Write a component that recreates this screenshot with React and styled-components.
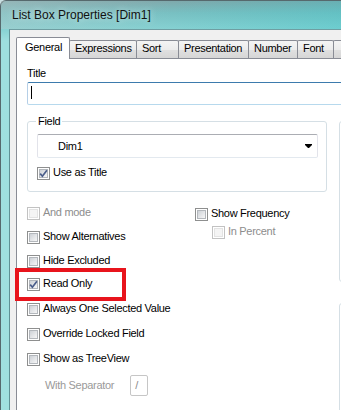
import React from "react";
import styled, { createGlobalStyle } from "styled-components";

const Global = createGlobalStyle`
  html, body { margin: 0; padding: 0; background: #c9dfe1; overflow: hidden; }
  #root { width: 341px; height: 410px; overflow: hidden; }
`;

const Window = styled.div`
  width: 430px;
  height: 440px;
  box-sizing: border-box;
  border: 1px solid #56696d;
  border-right: none;
  border-bottom: none;
  border-radius: 6px 0 0 0;
  background: linear-gradient(180deg, #7fa9ac 0px, #78c0c2 12px, #84d0d1 27px, #9edfdf 40px, #a0e0df 100%);
  display: flex;
  flex-direction: column;
  font-family: "Liberation Sans", Arial, sans-serif;
`;

const TitleBar = styled.div`
  height: 28px;
  flex: none;
  box-sizing: border-box;
  padding: 7px 0 0 11px;
  font-size: 12px;
  line-height: 14px;
  color: #111;
  text-shadow: 0 0 6px rgba(230, 250, 250, 0.8);
  background: linear-gradient(90deg, rgba(190, 205, 205, 0.35) 0%, rgba(0, 0, 0, 0) 40%, rgba(30, 195, 200, 0.35) 100%);
`;

const FrameBody = styled.div`
  flex: 1;
  display: flex;
  padding-left: 8px;
`;

const Client = styled.div`
  flex: 1;
  display: flex;
  flex-direction: column;
  background: #f0f0f0;
  border-left: 1px solid #5f9195;
  border-top: 1px solid #6f9ea2;
  padding: 7px 0 0 6px;
`;

const TabRow = styled.div`
  display: flex;
  align-items: flex-end;
  height: 21px;
  flex: none;
`;

const Tab = styled.div`
  position: relative;
  z-index: ${(p) => (p.$selected ? 2 : 1)};
  box-sizing: border-box;
  width: ${(p) => p.$w}px;
  height: ${(p) => (p.$selected ? 22 : 18)}px;
  margin-left: -1px;
  margin-bottom: ${(p) => (p.$selected ? -1 : 0)}px;
  border: 1px solid #898c95;
  border-bottom: none;
  border-radius: 2px 2px 0 0;
  background: ${(p) =>
    p.$selected
      ? "#ffffff"
      : "linear-gradient(180deg, #f4f4f4 0%, #ececec 50%, #e0e0e0 51%, #d6d6d6 100%)"};
  padding: ${(p) => (p.$selected ? "3px 0 0 8px" : "1px 0 0 5px")};
  font-size: 11px;
  line-height: 13px;
  letter-spacing: -0.3px;
  color: #000;
  white-space: nowrap;
  &:first-child { margin-left: 0; }
`;

const Panel = styled.div`
  position: relative;
  flex: 1;
  background: #fff;
  border: 1px solid #898c95;
  padding: 8px 0 0 10px;
  font-size: 11px;
  letter-spacing: -0.3px;
  color: #000;
`;

const Label = styled.div`
  line-height: 13px;
  height: 13px;
`;

const TextInput = styled.div`
  position: relative;
  box-sizing: border-box;
  margin-top: 2px;
  height: 23px;
  width: 380px;
  border: 1px solid #b5cfe7;
  border-top-color: #3d7bad;
  border-bottom-color: #b7d9ed;
  border-radius: 2px;
  background: #fff;
  padding: 3px 0 0 3px;
`;

const Caret = styled.div`
  width: 1px;
  height: 13px;
  background: #000;
`;

const Columns = styled.div`
  display: flex;
  margin-top: 16px;
`;

const LeftCol = styled.div`
  width: 300px;
  flex: none;
`;

const RightCol = styled.div`
  margin-left: 12px;
  flex: 1;
  display: flex;
  flex-direction: column;
`;

const GroupBox = styled.div`
  position: relative;
  box-sizing: border-box;
  border: 1px solid #d5dfe5;
  border-radius: 3px;
  height: ${(p) => (p.$h ? `${p.$h}px` : "auto")};
  margin-top: ${(p) => p.$mt || 0}px;
  padding: ${(p) => p.$pad || "0"};
`;

const Legend = styled.span`
  position: absolute;
  left: 8px;
  top: -7px;
  padding: 0 2px;
  background: #fff;
  line-height: 13px;
`;

const Combo = styled.div`
  box-sizing: border-box;
  width: 281px;
  height: 24px;
  border: 1px solid #e2e3ea;
  border-top-color: #abadb3;
  border-bottom-color: #e3e9ef;
  border-radius: 2px;
  background: #fff;
  display: flex;
  align-items: center;
  justify-content: space-between;
  padding: 0 5px 0 20px;
  line-height: 13px;
`;

const CheckRow = styled.div`
  display: flex;
  align-items: flex-start;
  height: 13px;
  margin-top: ${(p) => p.$mt || 0}px;
  margin-left: ${(p) => p.$ml || 0}px;
  color: ${(p) => (p.$disabled ? "#8d8d8d" : "#000")};
`;

const Box = styled.span`
  position: relative;
  flex: none;
  box-sizing: border-box;
  width: 13px;
  height: 13px;
  border: 1px solid ${(p) => (p.$disabled ? "#c2c2c2" : "#8e8f8f")};
  background: #fff;
  &::before {
    content: "";
    position: absolute;
    left: 1px;
    top: 1px;
    width: 9px;
    height: 9px;
    box-sizing: border-box;
    border: 1px solid ${(p) => (p.$disabled ? "#e3e3e3" : "#b3b7bc")};
    background: ${(p) =>
      p.$disabled
        ? "#f4f4f4"
        : "linear-gradient(135deg, #cdd1d6 0%, #e2e4e7 50%, #f6f6f6 100%)"};
  }
  svg { position: absolute; left: 0; top: 0; }
`;

const CheckText = styled.span`
  margin-left: 3px;
  line-height: 11px;
  white-space: nowrap;
`;

const Options = styled.div`
  display: grid;
  grid-template-columns: 168px 1fr;
  margin-top: 15px;
`;

const OptList = styled.div`
  display: flex;
  flex-direction: column;
`;

const SepRow = styled.div`
  display: flex;
  align-items: center;
  margin-top: 9px;
  padding-left: 18px;
  color: #9a9a9a;
  line-height: 13px;
`;

const SepInput = styled.div`
  box-sizing: border-box;
  width: 18px;
  height: 21px;
  margin-left: 16px;
  border: 1px solid #c6c6c6;
  border-radius: 2px;
  padding: 3px 0 0 4px;
  color: #8a8a8a;
  line-height: 13px;
`;

const Highlight = styled.div`
  position: absolute;
  left: -2px;
  top: 209px;
  width: 111px;
  height: 33px;
  box-sizing: border-box;
  border: 4px solid #e8141c;
  pointer-events: none;
`;

function CheckBox({ label, checked, disabled, mt, ml }) {
  return (
    <CheckRow $mt={mt} $ml={ml} $disabled={disabled}>
      <Box $disabled={disabled}>
        {checked && (
          <svg width="11" height="11" viewBox="0 0 11 11">
            <path d="M2.2 5.6 L4.4 8.2 L8.9 2.2" fill="none" stroke="#4a5d8a" strokeWidth="1.7" />
          </svg>
        )}
      </Box>
      <CheckText>{label}</CheckText>
    </CheckRow>
  );
}

const tabs = [
  { label: "General", w: 54, selected: true },
  { label: "Expressions", w: 68 },
  { label: "Sort", w: 43 },
  { label: "Presentation", w: 71 },
  { label: "Number", w: 50 },
  { label: "Font", w: 37 },
  { label: "", w: 56 },
];

export default function App() {
  return (
    <>
      <Global />
      <Window>
        <TitleBar>List Box Properties [Dim1]</TitleBar>
        <FrameBody>
          <Client>
            <TabRow>
              {tabs.map((t, i) => (
                <Tab key={i} $w={t.w} $selected={t.selected}>
                  {t.label}
                </Tab>
              ))}
            </TabRow>
            <Panel>
              <Label>Title</Label>
              <TextInput>
                <Caret />
              </TextInput>
              <Columns>
                <LeftCol>
                  <GroupBox $pad="12px 0 11px 9px">
                    <Legend>Field</Legend>
                    <Combo>
                      <span>Dim1</span>
                      <svg width="7" height="4" viewBox="0 0 7 4">
                        <polygon points="0,0 7,0 7,1 4,4 3,4 0,1" fill="#000" />
                      </svg>
                    </Combo>
                    <CheckBox label="Use as Title" checked mt={9} />
                  </GroupBox>
                  <Options>
                    <OptList>
                      <CheckBox label="And mode" disabled />
                      <CheckBox label="Show Alternatives" mt={11} />
                      <CheckBox label="Hide Excluded" mt={11} />
                      <CheckBox label="Read Only" checked mt={10} />
                      <CheckBox label="Always One Selected Value" mt={12} />
                      <CheckBox label="Override Locked Field" mt={12} />
                      <CheckBox label="Show as TreeView" mt={12} />
                      <SepRow>
                        With Separator
                        <SepInput>/</SepInput>
                      </SepRow>
                    </OptList>
                    <OptList>
                      <CheckBox label="Show Frequency" mt={1} />
                      <CheckBox label="In Percent" disabled mt={5} ml={17} />
                    </OptList>
                  </Options>
                </LeftCol>
                <RightCol>
                  <GroupBox $h={161} />
                  <GroupBox $h={200} $mt={21} />
                </RightCol>
              </Columns>
              <Highlight />
            </Panel>
          </Client>
        </FrameBody>
      </Window>
    </>
  );
}
